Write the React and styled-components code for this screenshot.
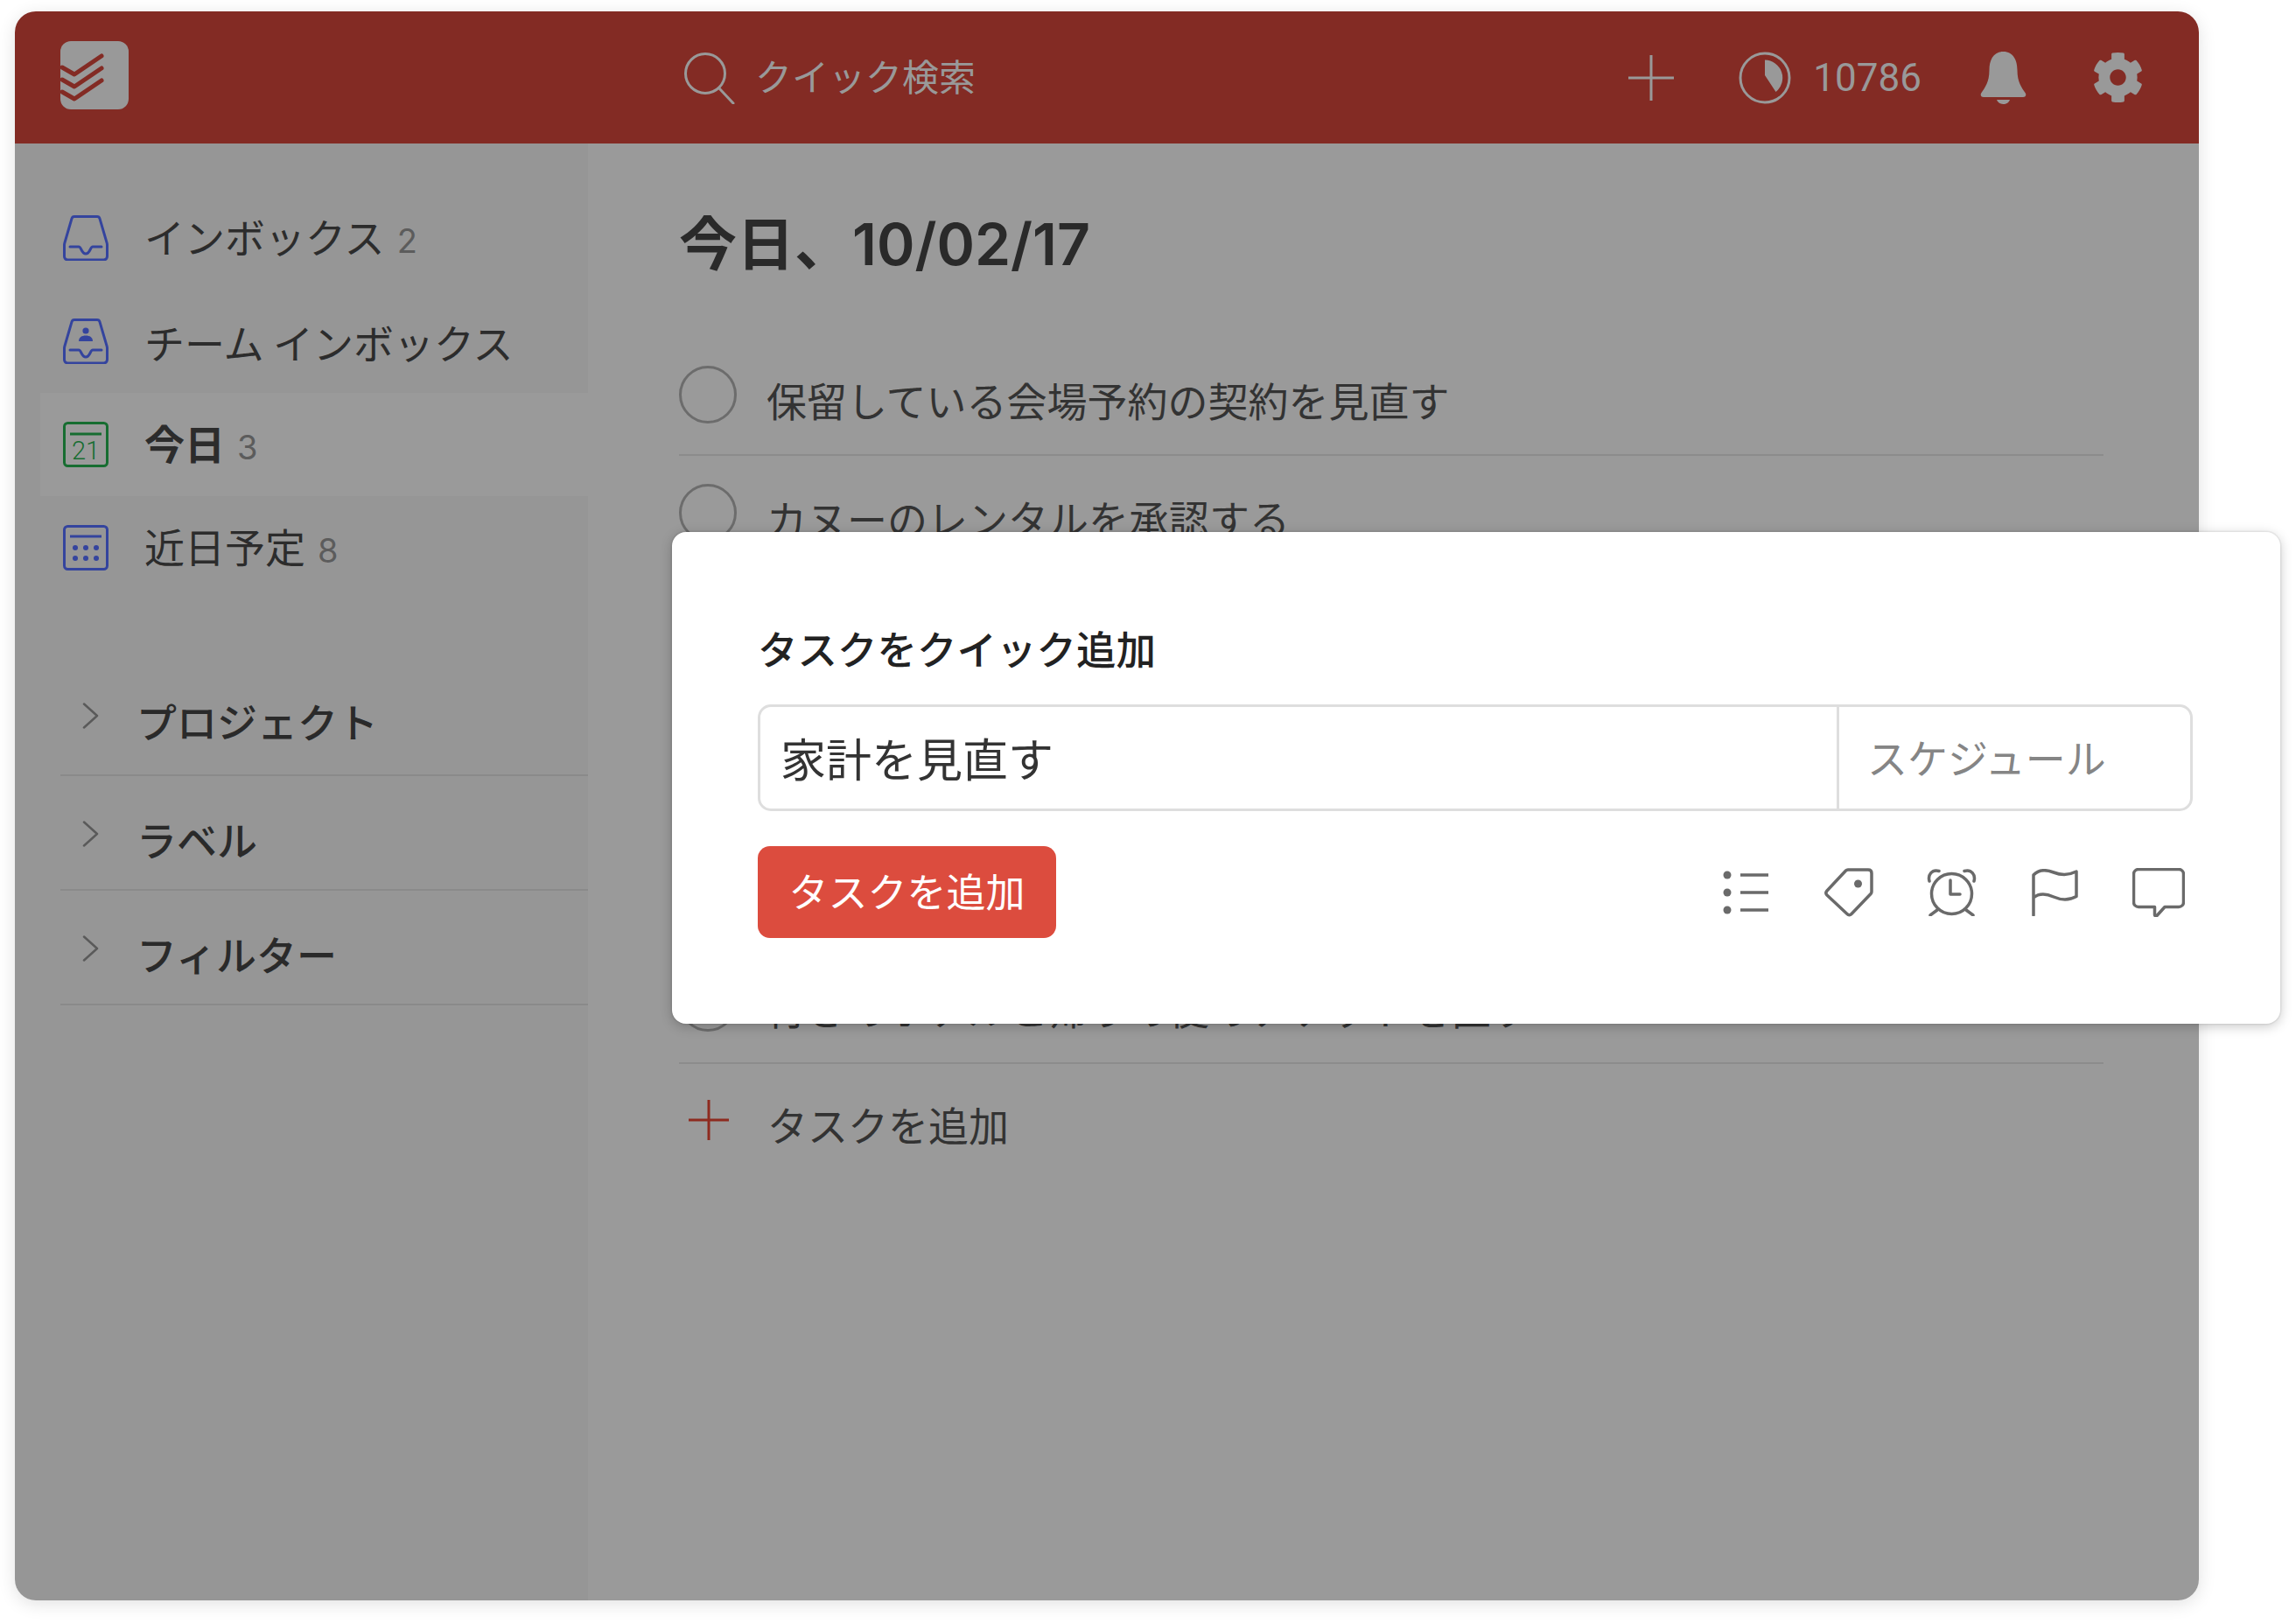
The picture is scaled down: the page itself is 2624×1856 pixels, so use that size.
import React from "react";
import styled, { createGlobalStyle } from "styled-components";
import { FaCog } from "react-icons/fa";

const FONT = `"Noto Sans CJK JP", "Noto Sans", Inter, sans-serif`;
const LATIN = `Inter, "Noto Sans CJK JP", sans-serif`;

const Global = createGlobalStyle`
  * { box-sizing: border-box; }
  html, body { margin: 0; background: #fff; }
  body { font-family: ${FONT}; color: #2c2c2c; }
`;

const Page = styled.div`
  width: 2624px;
  height: 1856px;
  padding: 13px 0 0 17px;
  overflow: hidden;
`;

const AppWindow = styled.div`
  position: relative;
  width: 2496px;
  height: 1816px;
  display: flex;
  flex-direction: column;
  border-radius: 24px;
  box-shadow: 0 4px 20px rgba(0, 0, 0, 0.12);
`;

const Header = styled.header`
  height: 151px;
  flex: none;
  display: flex;
  align-items: center;
  padding: 0 63px 0 52px;
  background: #832b24;
  border-radius: 24px 24px 0 0;
  color: #999;
`;

const Logo = styled.svg`
  width: 78px;
  height: 78px;
  flex: none;
  margin-top: -6px;
`;

const Search = styled.div`
  display: flex;
  align-items: center;
  gap: 22px;
  margin-left: 634px;
  font-size: 42px;
  line-height: 60px;
  color: #999;
`;

const SearchLabel = styled.span`
  margin-top: -6px;
`;

const HeaderTools = styled.div`
  margin-left: auto;
  display: flex;
  align-items: center;
`;

const Karma = styled.div`
  display: flex;
  align-items: center;
  gap: 25px;
  margin-left: 74px;
  font-family: Roboto, "Liberation Sans", sans-serif;
  font-weight: 400;
  font-size: 44px;
  line-height: 60px;
  color: #999;
`;

const Bell = styled.svg`
  width: 53px;
  height: 60px;
  margin-left: 67px;
`;

const Gear = styled(FaCog)`
  width: 59px;
  height: 59px;
  margin-left: 75px;
  color: #999;
`;

const Body = styled.div`
  flex: 1;
  display: flex;
  min-height: 0;
  border-radius: 0 0 24px 24px;
  overflow: hidden;
`;

const Sidebar = styled.aside`
  width: 655px;
  flex: none;
  padding: 49px 0 0 29px;
  background: #969696;
`;

const NavRow = styled.div`
  height: 118px;
  display: flex;
  align-items: center;
  gap: 41px;
  padding-left: 26px;
  background: ${(p) => (p.$active ? "#9a9a9a" : "transparent")};
  font-size: 46px;
  font-weight: ${(p) => (p.$active ? 700 : 400)};
  color: #2c2c2c;
`;

const NavIcon = styled.svg`
  width: 52px;
  height: 52px;
  flex: none;
`;

const NavLabel = styled.span`
  display: flex;
  align-items: baseline;
  gap: 14px;
  line-height: 60px;
`;

const Count = styled.span`
  font-family: ${LATIN};
  font-weight: 400;
  font-size: 38px;
  color: #5c5c5c;
`;

const Sections = styled.div`
  margin: 71px 0 0 23px;
`;

const SectionRow = styled.div`
  height: 131px;
  display: flex;
  align-items: flex-start;
  gap: 42px;
  padding: 41px 0 0 25px;
  border-bottom: 2px solid #8a8a8a;
  font-size: 46px;
  font-weight: 500;
  line-height: 60px;
  color: #2a2a2a;

  &:first-child {
    padding-top: 37px;
  }
`;

const Chevron = styled.svg`
  width: 20px;
  height: 30px;
  flex: none;
  margin-top: 10px;
`;

const Main = styled.main`
  flex: 1;
  padding: 70px 109px 0 104px;
  background: #9a9a9a;
`;

const Title = styled.h1`
  margin: 0 0 67px;
  font-size: 66px;
  line-height: 80px;
  font-weight: 700;
  color: #2a2a2a;
`;

const TitleDate = styled.span`
  font-family: ${LATIN};
  font-weight: 600;
`;

const TaskRow = styled.div`
  height: ${(p) => p.$h || 135}px;
  display: flex;
  align-items: flex-start;
  gap: 34px;
  padding-top: ${(p) => (p.$h ? p.$h - 103 : 32)}px;
  border-bottom: 2px solid #8c8c8c;
`;

const Circle = styled.span`
  width: 66px;
  height: 66px;
  flex: none;
  border-radius: 50%;
  border: 3px solid #6c6c6c;
`;

const TaskText = styled.span`
  margin-top: 8px;
  font-size: 46px;
  line-height: 60px;
  color: #333;
`;

const AddRow = styled.div`
  display: flex;
  align-items: flex-start;
  padding: 41px 0 0 11px;
  gap: 44px;
`;

const AddText = styled.span`
  margin-top: -3px;
  font-size: 46px;
  line-height: 60px;
  color: #333;
`;

const Modal = styled.section`
  position: absolute;
  left: 751px;
  top: 595px;
  width: 1838px;
  height: 562px;
  padding: 102px 100px 0 98px;
  background: #fff;
  border-radius: 16px;
  box-shadow: 0 3px 14px rgba(0, 0, 0, 0.22), 0 0 0 1.5px rgba(0, 0, 0, 0.05);
`;

const ModalTitle = styled.h2`
  margin: 0 0 35px;
  font-size: 45.5px;
  line-height: 60px;
  font-weight: 500;
  color: #222;
`;

const Field = styled.div`
  height: 122px;
  display: flex;
  border: 3px solid #dedede;
  border-radius: 15px;
`;

const FieldText = styled.div`
  flex: 1;
  display: flex;
  align-items: center;
  padding: 0 0 2px 23px;
  font-size: 52px;
  color: #333;
`;

const FieldSchedule = styled.div`
  width: 404px;
  flex: none;
  display: flex;
  align-items: center;
  padding: 0 0 4px 32px;
  border-left: 3px solid #dedede;
  font-size: 46px;
  color: #858585;
`;

const ModalFooter = styled.div`
  margin-top: 40px;
  display: flex;
  align-items: center;
  justify-content: space-between;
`;

const AddButton = styled.div`
  width: 341px;
  height: 105px;
  display: flex;
  align-items: center;
  justify-content: center;
  padding-bottom: 4px;
  background: #dc4c3e;
  border-radius: 14px;
  font-size: 45px;
  color: #fff;
`;

const Tools = styled.div`
  display: flex;
  align-items: center;
  gap: 58px;
  margin-right: 9px;
`;

const ToolCell = styled.div`
  width: 60px;
  display: flex;
  justify-content: center;
`;

const blue = "#34449e";
const green = "#176d31";
const line = { fill: "none", strokeLinecap: "round", strokeLinejoin: "round" };

const TrayIcon = ({ person }) => (
  <NavIcon viewBox="0 0 52 52">
    <path
      {...line}
      stroke={blue}
      strokeWidth="3"
      d="M13 1.500h26c1.600 0 2.600.9 3 2.300l8 27.400c.3 1 .5 1.900.5 2.900v13c0 2.300-1.700 3.900-3.900 3.900H5.400c-2.200 0-3.900-1.600-3.900-3.900v-13c0-1 .2-1.900.5-2.900l8-27.400c.4-1.400 1.400-2.300 3-2.300z"
    />
    <path
      {...line}
      stroke={blue}
      strokeWidth="3"
      d="M8 36h10c3 0 3 8 8 8s5-8 8-8H44"
    />
    {person && (
      <>
        <circle cx="26" cy="14" r="3.600" fill={blue} />
        <path fill={blue} d="M18 26c0-4.500 3.500-6.500 8-6.500s8 2 8 6.500z" />
      </>
    )}
  </NavIcon>
);

const TodayIcon = () => (
  <NavIcon viewBox="0 0 52 52">
    <rect {...line} x="1.500" y="1.500" width="49" height="49" rx="4" stroke={green} strokeWidth="3" />
    <path stroke={green} strokeWidth="3" d="M8 14h36" />
    <text x="26" y="43" textAnchor="middle" fontFamily="Roboto, sans-serif" fontWeight="300" fontSize="29" fill={green}>
      21
    </text>
  </NavIcon>
);

const UpcomingIcon = () => (
  <NavIcon viewBox="0 0 52 52">
    <rect {...line} x="1.500" y="1.500" width="49" height="49" rx="4" stroke={blue} strokeWidth="3" />
    <path stroke={blue} strokeWidth="3" d="M8 13h36" />
    {[26, 38].map((y) =>
      [14, 26, 38].map((x) => <circle key={`${x}-${y}`} cx={x} cy={y} r="3" fill={blue} />)
    )}
  </NavIcon>
);

const ChevronIcon = () => (
  <Chevron viewBox="0 0 20 30">
    <path {...line} stroke="#5a5a5a" strokeWidth="2.500" d="M2 1.500 17 15 2 28.500" />
  </Chevron>
);

const grey = "#6a6a6a";
const TOOL_STROKE = "3.500";

const ListIcon = () => (
  <svg width="52" height="50" viewBox="0 0 52 50">
    <circle cx="5" cy="5" r="4.500" fill={grey} />
    <circle cx="5" cy="25" r="4.500" fill={grey} />
    <circle cx="5" cy="45" r="4.500" fill={grey} />
    <path stroke={grey} strokeWidth={TOOL_STROKE} d="M20 5h32M20 25h32M20 45h32" />
  </svg>
);

const TagIcon = () => (
  <svg width="56" height="56" viewBox="0 0 56 56">
    <path
      {...line}
      stroke={grey}
      strokeWidth={TOOL_STROKE}
      d="M27 2h23c2.500 0 4 1.500 4 4v21c0 1-.4 1.800-1 2.500L31 52.500c-1.500 1.600-3.500 1.600-5 0L3 31c-1.500-1.600-1.500-3.400 0-5L24.500 3c.7-.7 1.500-1 2.500-1z"
    />
    <circle cx="38.500" cy="18" r="4.500" fill={grey} />
  </svg>
);

const AlarmIcon = () => (
  <svg width="58" height="54" viewBox="0 0 58 54">
    <g {...line} stroke={grey} strokeWidth={TOOL_STROKE}>
      <circle cx="28.500" cy="28.500" r="23" />
      <path d="M27 13v16h11" />
      <path d="M3 14C1 7 6 0 14 2.500M54 14c2-7-3-14-11-11.500" />
      <path d="M12 47l-8 6M45 47l8 6" />
    </g>
  </svg>
);

const FlagIcon = () => (
  <svg width="54" height="54" viewBox="0 0 54 54">
    <path
      {...line}
      stroke={grey}
      strokeWidth={TOOL_STROKE}
      d="M2 53V7C8 .5 16 .5 25 4s17 3.500 26-1v28.500c-9 5-18 4-26 .5S8 28 2 33"
    />
  </svg>
);

const CommentIcon = () => (
  <svg width="60" height="56" viewBox="0 0 60 56">
    <path
      {...line}
      stroke={grey}
      strokeWidth={TOOL_STROKE}
      d="M7 1.500h46c3 0 5.500 2.500 5.500 5.500v32c0 3-2.500 5.500-5.500 5.500H37L28 54.500c-1 .8-2.500.2-2.500-1v-9H7c-3 0-5.500-2.500-5.500-5.500V7c0-3 2.500-5.500 5.500-5.500z"
    />
  </svg>
);

export default function App() {
  return (
    <Page>
      <Global />
      <AppWindow>
        <Header>
          <Logo viewBox="0 0 78 78">
            <rect width="78" height="78" rx="12" fill="#999" />
            <g fill="none" stroke="#832b24" strokeWidth="5" strokeLinecap="round" strokeLinejoin="round">
              <path d="M2 30l14 8L47 17" />
              <path d="M2 44l14 8L47 31" />
              <path d="M2 58l14 8L47 45" />
            </g>
          </Logo>
          <Search>
            <svg width="60" height="60" viewBox="0 0 60 60">
              <circle cx="25" cy="25" r="22.500" fill="none" stroke="#999" strokeWidth="3" />
              <path stroke="#999" strokeWidth="3" strokeLinecap="round" d="M41 42l16 17" />
            </svg>
            <SearchLabel>クイック検索</SearchLabel>
          </Search>
          <HeaderTools>
            <svg width="52" height="52" viewBox="0 0 52 52">
              <path stroke="#999" strokeWidth="3" d="M26 0v52M0 26h52" />
            </svg>
            <Karma>
              <svg width="60" height="60" viewBox="0 0 60 60">
                <circle cx="30" cy="30" r="28" fill="none" stroke="#999" strokeWidth="3" />
                <path fill="#999" d="M30 9.500A20.500 20.500 0 0 1 42.500 46L30 27z" />
              </svg>
              10786
            </Karma>
            <Bell viewBox="0 0 53 60">
              <path
                fill="#999"
                d="M26.500 0C15 0 10.500 10 10.500 21c0 14-5 20-9 26C0 49 .5 52 4 52h45c3.500 0 4-3 2.500-5-4-6-9-12-9-26C42.500 10 38 0 26.500 0zM19 55h15c-1 3-4 5-7.500 5S20 58 19 55z"
              />
            </Bell>
            <Gear />
          </HeaderTools>
        </Header>
        <Body>
          <Sidebar>
            <NavRow>
              <TrayIcon />
              <NavLabel>
                インボックス<Count>2</Count>
              </NavLabel>
            </NavRow>
            <NavRow>
              <TrayIcon person />
              <NavLabel>チーム インボックス</NavLabel>
            </NavRow>
            <NavRow $active>
              <TodayIcon />
              <NavLabel>
                今日<Count>3</Count>
              </NavLabel>
            </NavRow>
            <NavRow>
              <UpcomingIcon />
              <NavLabel>
                近日予定<Count>8</Count>
              </NavLabel>
            </NavRow>
            <Sections>
              <SectionRow>
                <ChevronIcon />
                プロジェクト
              </SectionRow>
              <SectionRow>
                <ChevronIcon />
                ラベル
              </SectionRow>
              <SectionRow>
                <ChevronIcon />
                フィルター
              </SectionRow>
            </Sections>
          </Sidebar>
          <Main>
            <Title>
              今日、<TitleDate>10/02/17</TitleDate>
            </Title>
            <TaskRow>
              <Circle />
              <TaskText>保留している会場予約の契約を見直す</TaskText>
            </TaskRow>
            <TaskRow>
              <Circle />
              <TaskText>カヌーのレンタルを承認する</TaskText>
            </TaskRow>
            <TaskRow $h={560}>
              <Circle />
              <TaskText>行きのホテルと帰りの便のチケットを直す</TaskText>
            </TaskRow>
            <AddRow>
              <svg width="46" height="46" viewBox="0 0 46 46">
                <path stroke="#8e2a1f" strokeWidth="3" d="M23 0v46M0 23h46" />
              </svg>
              <AddText>タスクを追加</AddText>
            </AddRow>
          </Main>
        </Body>
        <Modal>
          <ModalTitle>タスクをクイック追加</ModalTitle>
          <Field>
            <FieldText>家計を見直す</FieldText>
            <FieldSchedule>スケジュール</FieldSchedule>
          </Field>
          <ModalFooter>
            <AddButton>タスクを追加</AddButton>
            <Tools>
              <ToolCell>
                <ListIcon />
              </ToolCell>
              <ToolCell>
                <TagIcon />
              </ToolCell>
              <ToolCell>
                <AlarmIcon />
              </ToolCell>
              <ToolCell>
                <FlagIcon />
              </ToolCell>
              <ToolCell>
                <CommentIcon />
              </ToolCell>
            </Tools>
          </ModalFooter>
        </Modal>
      </AppWindow>
    </Page>
  );
}
